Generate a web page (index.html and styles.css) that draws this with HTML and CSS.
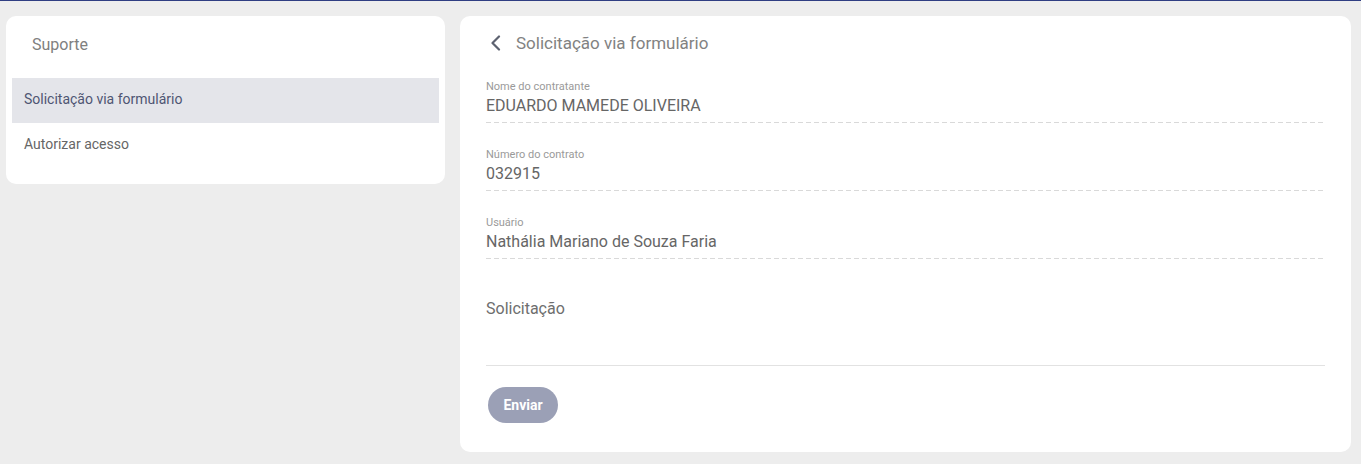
FILE: index.html
```html
<!DOCTYPE html>
<html lang="pt-BR">
<head>
<meta charset="utf-8">
<title>Suporte</title>
<link rel="stylesheet" href="styles.css">
</head>
<body>
<div class="page">
  <aside class="card side">
    <div class="side-title">Suporte</div>
    <nav class="menu">
      <a class="menu-item active">Solicitação via formulário</a>
      <a class="menu-item">Autorizar acesso</a>
    </nav>
  </aside>
  <main class="card content">
    <div class="head">
      <svg class="back" width="12" height="16" viewBox="0 0 12 16"><path d="M9 1.5 L2.5 8 L9 14.5" fill="none" stroke="#5d6270" stroke-width="2.2" stroke-linecap="round" stroke-linejoin="round"/></svg>
      <span class="head-title">Solicitação via formulário</span>
    </div>
    <div class="field">
      <div class="label">Nome do contratante</div>
      <div class="value">EDUARDO MAMEDE OLIVEIRA</div>
    </div>
    <div class="field">
      <div class="label">Número do contrato</div>
      <div class="value">032915</div>
    </div>
    <div class="field">
      <div class="label">Usuário</div>
      <div class="value">Nathália Mariano de Souza Faria</div>
    </div>
    <div class="request">
      <div class="request-text">Solicitação</div>
    </div>
    <button class="send">Enviar</button>
  </main>
</div>
</body>
</html>
```
FILE: styles.css
```css
* { box-sizing: border-box; }
html, body { margin: 0; padding: 0; }
body {
  background: #ededed;
  border-top: 1px solid #2f3d82;
  font-family: Roboto, "Liberation Sans", Arial, sans-serif;
  height: 464px;
  overflow: hidden;
}
.page {
  display: grid;
  grid-template-columns: 439px 891px;
  column-gap: 15px;
  align-items: start;
  padding: 15px 10px 0 6px;
}
.card {
  background: #fff;
  border-radius: 10px;
}
.side {
  padding: 0 6px 16px 6px;
}
.side-title {
  height: 62px;
  display: flex;
  align-items: center;
  padding: 0 0 6px 20px;
  font-size: 16px;
  color: #808080;
}
.menu { display: flex; flex-direction: column; }
.menu-item {
  height: 45px;
  display: flex;
  align-items: center;
  padding: 0 0 3px 12px;
  font-size: 14px;
  color: #666;
}
.menu-item.active {
  background: #e4e5ea;
  color: #4f5573;
}
.content {
  padding: 15px 26px 29px 26px;
  display: flex;
  flex-direction: column;
}
.head {
  height: 24px;
  display: flex;
  align-items: center;
  gap: 14px;
  padding-left: 4px;
  margin-bottom: 25px;
}
.back { display: block; }
.head-title {
  font-size: 17px;
  color: #828282;
}
.field {
  padding-bottom: 5px;
  margin-bottom: 25px;
  background-image: repeating-linear-gradient(to right, #d9d9d9 0 5px, transparent 5px 8px);
  background-size: 100% 1px;
  background-position: left bottom;
  background-repeat: no-repeat;
}
.label {
  font-size: 11px;
  line-height: 14px;
  color: #9a9a9a;
}
.value {
  font-size: 16px;
  line-height: 24px;
  color: #666;
}
.request {
  padding-top: 13px;
  height: 82px;
  border-bottom: 1px solid #e2e2e2;
}
.request-text {
  font-size: 16px;
  line-height: 24px;
  color: #6e6e6e;
}
.send {
  align-self: flex-start;
  margin: 21px 0 0 2px;
  width: 70px;
  height: 36px;
  border: none;
  border-radius: 18px;
  background: #9ba0b6;
  color: #fff;
  font-family: Roboto, "Liberation Sans", Arial, sans-serif;
  font-size: 14px;
  font-weight: 700;
  padding: 0;
}
```
